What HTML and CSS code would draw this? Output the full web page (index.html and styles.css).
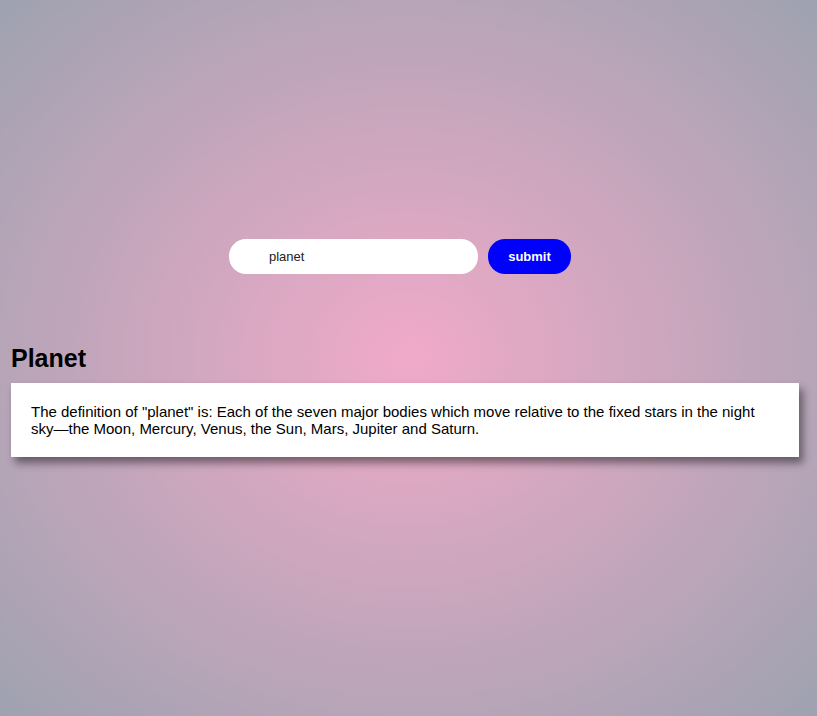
FILE: index.html
```html
<!DOCTYPE html>
<html>
<head>
<meta charset="utf-8">
<link rel="stylesheet" href="styles.css">
</head>
<body>
<div class="page">
  <form class="search">
    <input class="search-input" type="text" value="planet">
    <button class="search-btn" type="button">submit</button>
  </form>
  <h1 class="title">Planet</h1>
  <div class="card">
    <p class="def">The definition of "planet" is: Each of the seven major bodies which move relative to the fixed stars in the night sky—the Moon, Mercury, Venus, the Sun, Mars, Jupiter and Saturn.</p>
  </div>
</div>
</body>
</html>
```

FILE: styles.css
```css
html, body {
  margin: 0;
  height: 100%;
}
body {
  background: radial-gradient(ellipse farthest-corner at 50% 50%, #f0aac9 0%, #9ea2b0 100%);
  font-family: "Liberation Sans", Arial, sans-serif;
  color: #000;
}
.page {
  padding: 239px 18px 0 11px;
}
.search {
  display: flex;
  justify-content: center;
  gap: 10px;
  margin: 0 0 0 -10px;
}
.search-input {
  width: 249px;
  height: 35px;
  box-sizing: border-box;
  border: none;
  border-radius: 17px;
  background: #fff;
  padding: 0 10px 0 40px;
  font-family: "Liberation Sans", Arial, sans-serif;
  font-size: 13px;
  color: #222;
  outline: none;
}
.search-btn {
  width: 83px;
  height: 35px;
  border: none;
  border-radius: 17px;
  background: #0000ff;
  color: #fff;
  font-family: "Liberation Sans", Arial, sans-serif;
  font-weight: bold;
  font-size: 13px;
}
.title {
  margin: 70px 0 10px;
  font-size: 25px;
  line-height: 29px;
  font-weight: bold;
}
.card {
  background: #fff;
  padding: 20px;
  box-shadow: 4px 6px 8px rgba(0,0,0,0.45);
}
.def {
  margin: 0;
  font-size: 15px;
  line-height: 17px;
}
```
